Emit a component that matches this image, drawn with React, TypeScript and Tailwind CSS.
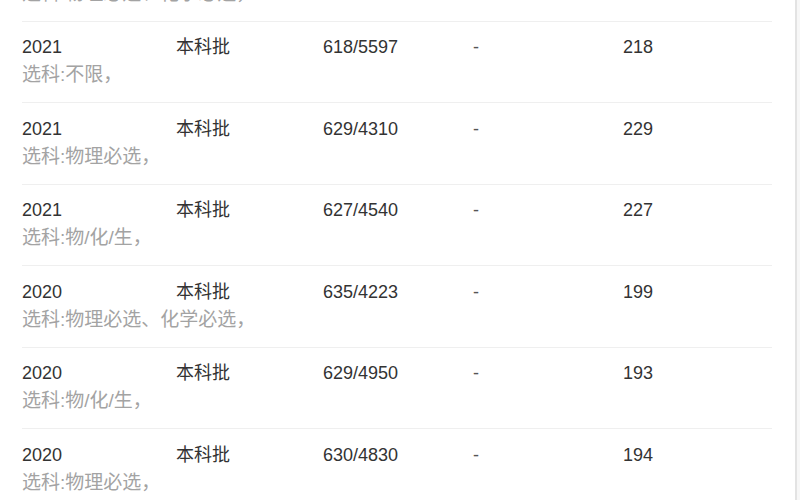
import React from "react";

type Row = { year: string; batch: string; score: string; dash: string; rank: string; note: string };

const rows: Row[] = [
  { year: "2021", batch: "本科批", score: "618/5597", dash: "-", rank: "218", note: "选科:不限，" },
  { year: "2021", batch: "本科批", score: "629/4310", dash: "-", rank: "229", note: "选科:物理必选，" },
  { year: "2021", batch: "本科批", score: "627/4540", dash: "-", rank: "227", note: "选科:物/化/生，" },
  { year: "2020", batch: "本科批", score: "635/4223", dash: "-", rank: "199", note: "选科:物理必选、化学必选，" },
  { year: "2020", batch: "本科批", score: "629/4950", dash: "-", rank: "193", note: "选科:物/化/生，" },
  { year: "2020", batch: "本科批", score: "630/4830", dash: "-", rank: "194", note: "选科:物理必选，" },
];

export default function App() {
  return (
    <div
      className="w-[800px] h-[500px] overflow-hidden bg-[#f7f7f7]"
      style={{ fontFamily: '"Liberation Sans", "Noto Sans CJK SC", sans-serif' }}
    >
      <div className="w-[797px] h-[500px] bg-white border-r-[2px] border-[#e3e3e3] overflow-hidden">
        <div className="-mt-[20.5px] pl-[22px] w-[772px]">
          <div className="h-[42px] border-b border-[#efefef] text-[19px] leading-[28px]">
            <div className="text-[#a3a3a3] whitespace-nowrap">选科:物理必选、化学必选，</div>
          </div>
          {rows.map((r, i) => (
            <div key={i} className="h-[81.5px] pt-[11.5px] border-b border-[#efefef] text-[18px] leading-[28px]">
              <div className="flex text-[#333]">
                <div className="w-[154px]">{r.year}</div>
                <div className="w-[147px]">{r.batch}</div>
                <div className="w-[150px]">{r.score}</div>
                <div className="w-[150px] text-[#555]">{r.dash}</div>
                <div>{r.rank}</div>
              </div>
              <div className="text-[#a3a3a3] text-[19px] whitespace-nowrap">{r.note}</div>
            </div>
          ))}
        </div>
      </div>
    </div>
  );
}
